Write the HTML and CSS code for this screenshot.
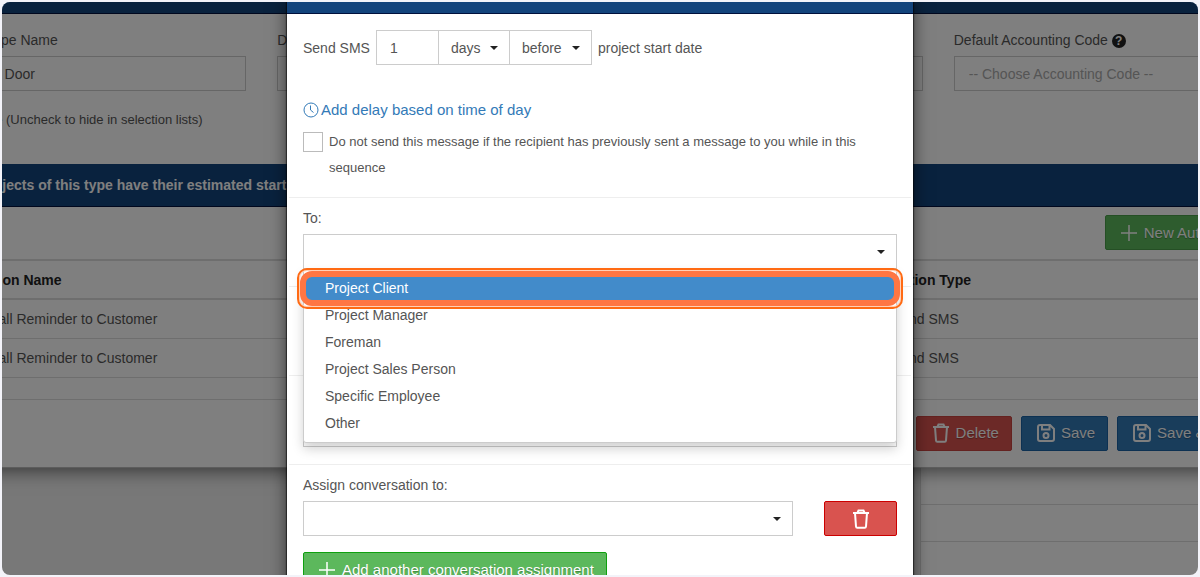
FILE: index.html
```html
<!DOCTYPE html>
<html lang="en">

<head>
  <meta charset="UTF-8" />
  <meta name="viewport" content="width=device-width, initial-scale=1.0" />
  <title>Project Type – Send SMS</title>
  <link rel="stylesheet" href="styles.css">
</head>

<body>
  <svg class="sprite" aria-hidden="true">
    <symbol id="icon-trash" viewBox="0 0 18 20">
      <path d="M1 4h16M5.500 3.700l1-2.200h5l1 2.200M3 4l1 13.500q.1 1.300 1.300 1.300h7.400q1.200 0 1.300-1.300L15 4" />
    </symbol>
    <symbol id="icon-save" viewBox="0 0 18 18">
      <path d="M1 3q0-2 2-2h10l4 4v10q0 2-2 2H3q-2 0-2-2zM5 1v4.500h7.500V1" />
      <circle cx="9" cy="11.500" r="2.500" />
    </symbol>
    <symbol id="icon-plus" viewBox="0 0 16 16">
      <path d="M8 0v16M0 8h16" />
    </symbol>
    <symbol id="icon-clock" viewBox="0 0 16 16">
      <circle cx="8" cy="8" r="7" />
      <path d="M7.500 3.500V8l3 2.500" />
    </symbol>
  </svg>

  <div class="frame">
    <!-- Page behind the dialog -->
    <main class="page">
      <div class="panel">
        <div class="panel-top"></div>
        <div class="fields">
          <div class="field">
            <label for="type-name">Project Type Name</label>
            <input type="text" id="type-name" value="Garage Door">
          </div>
          <div class="field">
            <label for="description">Description</label>
            <input type="text" id="description">
          </div>
          <div class="field">
            <label for="category">Category</label>
            <input type="text" id="category">
          </div>
          <div class="field">
            <label for="code">Default Accounting Code <span class="help">?</span></label>
            <input type="text" id="code" placeholder="-- Choose Accounting Code --">
          </div>
        </div>
        <label class="active-row"><input type="checkbox" class="box" checked> Active (Uncheck to hide in selection lists)</label>

        <h2 class="bar">Projects of this type have their estimated start date</h2>
        <div class="toolbar">
          <button class="btn btn-green"><svg class="icon plus"><use href="#icon-plus" /></svg>New Automation</button>
        </div>
        <table class="actions">
          <thead>
            <tr>
              <th class="name">Action Name</th>
              <th>Action Type</th>
            </tr>
          </thead>
          <tbody>
            <tr>
              <td class="name">Install Reminder to Customer</td>
              <td>Send SMS</td>
            </tr>
            <tr>
              <td class="name">Install Reminder to Customer</td>
              <td>Send SMS</td>
            </tr>
            <tr class="spacer">
              <td colspan="2"></td>
            </tr>
          </tbody>
        </table>
        <div class="panel-footer">
          <button class="btn btn-red"><svg class="icon trash"><use href="#icon-trash" /></svg>Delete</button>
          <button class="btn btn-blue"><svg class="icon save"><use href="#icon-save" /></svg>Save</button>
          <button class="btn btn-blue"><svg class="icon save"><use href="#icon-save" /></svg>Save &amp; Close</button>
        </div>
      </div>
      <div class="under">
        <div class="under-left"></div>
        <div class="under-right">
          <div class="line"></div>
          <div class="line"></div>
          <div class="line"></div>
        </div>
      </div>
    </main>

    <div class="backdrop"></div>

    <!-- Send SMS dialog -->
    <div class="modal" role="dialog" aria-label="Send SMS">
      <div class="modal-header"></div>

      <section class="section timing">
        <div class="when">
          <label for="amount">Send SMS</label>
          <div class="group">
            <input type="text" id="amount" value="1">
            <div class="select unit">
              <select aria-label="Unit">
                <option>days</option>
              </select>
            </div>
            <div class="select direction">
              <select aria-label="Before or after">
                <option>before</option>
              </select>
            </div>
          </div>
          <span>project start date</span>
        </div>
        <a href="#" class="delay"><svg class="icon clock"><use href="#icon-clock" /></svg>Add delay based on time of day</a>
        <label class="check">
          <input type="checkbox" class="box">
          <span>Do not send this message if the recipient has previously sent a message to you while in this sequence</span>
        </label>
      </section>

      <section class="section">
        <label for="to">To:</label>
        <div class="select">
          <select id="to">
            <option></option>
          </select>
          <ul class="menu" role="listbox">
            <li class="selected" role="option" aria-selected="true">Project Client</li>
            <li role="option">Project Manager</li>
            <li role="option">Foreman</li>
            <li role="option">Project Sales Person</li>
            <li role="option">Specific Employee</li>
            <li role="option">Other</li>
          </ul>
        </div>
      </section>

      <section class="section">
        <label for="from">From:</label>
        <div class="select">
          <select id="from">
            <option></option>
          </select>
        </div>
      </section>

      <section class="section">
        <label for="template">Message:</label>
        <div class="select">
          <select id="template">
            <option></option>
          </select>
        </div>
      </section>

      <section class="section">
        <label for="assign">Assign conversation to:</label>
        <div class="assign">
          <div class="select">
            <select id="assign">
              <option></option>
            </select>
          </div>
          <button class="btn btn-red remove" aria-label="Remove"><svg class="icon trash"><use href="#icon-trash" /></svg></button>
        </div>
        <button class="btn btn-green"><svg class="icon plus"><use href="#icon-plus" /></svg>Add another conversation assignment</button>
      </section>
    </div>
  </div>
</body>

</html>
```
FILE: styles.css
```css
:root {
  --navy: #13447c;
  --navy-line: #00103c;
  --text: #555;
  --border: #ccc;
  --line: #eee;
  --orange: #ff6a13;
}

* {
  margin: 0;
  padding: 0;
  box-sizing: border-box;
}

body {
  font-family: "Liberation Sans", Arial, sans-serif;
  font-size: 14px;
  line-height: 20px;
  color: var(--text);
  background-color: #f3f3f9;
}

input,
select,
button {
  font: inherit;
  color: inherit;
}

.sprite {
  display: none;
}

.frame {
  position: relative;
  height: calc(100vh - 4px);
  margin: 2px;
  border-radius: 8px;
  overflow: hidden;
}

/* page behind */
.page {
  min-height: 100%;
  margin: 0 -78px;
  background-color: #f0f0f0;
  display: flex;
  flex-direction: column;
}

.panel {
  position: relative;
  background-color: #fff;
  border-bottom: 1px solid #bbb;
  box-shadow: 0 4px 16px rgba(0, 0, 0, 0.5);
}

.panel-top,
.modal-header {
  height: 12px;
  background-color: var(--navy);
  border-bottom: 1px solid var(--navy-line);
}

.fields {
  display: grid;
  grid-template-columns: repeat(4, 1fr);
  gap: 31px;
  padding: 16px 15px 0;
}

.field label {
  display: block;
  margin-bottom: 6px;
}

.field input {
  width: 100%;
  height: 35px;
  padding: 0 14px;
  border: 1px solid var(--border);
}

.field input::placeholder {
  color: #aaa;
}

.help {
  display: inline-block;
  width: 14px;
  height: 14px;
  border-radius: 50%;
  background-color: #222;
  color: #fff;
  font-size: 12px;
  font-weight: bold;
  line-height: 14px;
  text-align: center;
}

.box {
  appearance: none;
  flex: none;
  width: 20px;
  height: 20px;
  border: 1px solid #bbb;
  background-color: #fff;
}

.active-row {
  display: flex;
  gap: 8px;
  padding: 19px 15px 34px;
  font-size: 13px;
}

.bar {
  padding: 11px 55px;
  background-color: var(--navy);
  border-bottom: 1px solid var(--navy-line);
  color: #fff;
  font-size: 14px;
  line-height: 20px;
}

.toolbar,
.panel-footer {
  display: flex;
  justify-content: flex-end;
  gap: 9px;
  padding: 8px 10px 9px;
}

.panel-footer {
  padding: 16px 15px;
}

.actions {
  width: 100%;
  table-layout: fixed;
  border-collapse: collapse;
}

.actions th,
.actions td {
  height: 39px;
  padding: 0 8px;
  border-bottom: 1px solid #ddd;
  text-align: left;
}

.actions th {
  border-top: 2px solid #ddd;
  border-bottom: 2px solid #ddd;
  color: #222;
}

.actions .name {
  width: 71%;
  padding-left: 52px;
}

.actions .spacer td {
  height: 22px;
}

.under {
  flex: 1;
  display: flex;
}

.under-left {
  flex: 997;
}

.under-right {
  flex: 355;
  background-color: #fff;
  border-left: 1px solid #ddd;
}

.line {
  height: 37px;
  border-bottom: 1px solid #ddd;
}

/* buttons */
.btn {
  display: inline-flex;
  align-items: center;
  height: 35px;
  padding: 0 12px 0 15px;
  border: 1px solid;
  border-radius: 2px;
  color: #fff;
  font-size: 15px;
  text-shadow: 0 1px 1px rgba(0, 0, 0, 0.3);
  white-space: nowrap;
}

.btn-green {
  background-color: #5cb85c;
  border-color: #0fa00f;
}

.btn-red {
  background-color: #d9534f;
  border-color: #c00;
}

.btn-blue {
  background-color: #337ab7;
  border-color: #1b62a5;
}

.page .btn-green {
  border-color: #4a9f4a;
}

.page .btn-red {
  border-color: #c94440;
}

.icon {
  flex: none;
  fill: none;
  stroke: currentColor;
  stroke-width: 1.5;
}

.trash,
.save {
  width: 18px;
  height: 20px;
  margin-right: 6px;
  stroke-width: 2;
}

.save {
  height: 18px;
}

.plus {
  width: 16px;
  height: 16px;
  margin-right: 7px;
}

.clock {
  width: 16px;
  height: 16px;
  margin-right: 2px;
  stroke-width: 1;
}

/* dialog */
.backdrop {
  position: absolute;
  inset: 0;
  background-color: rgba(0, 0, 0, 0.5);
}

.modal {
  position: absolute;
  top: 0;
  left: 0;
  right: 0;
  width: 100%;
  max-width: 626px;
  min-height: 100%;
  margin: 0 auto;
  background-color: #fff;
  box-shadow: 0 0 1px 1px rgba(0, 0, 0, 0.5), 0 0 16px rgba(0, 0, 0, 0.6);
}

.section {
  margin: 0 2px;
  padding: 10px 14px 17px;
  border-bottom: 1px solid var(--line);
}

.section > label {
  display: block;
  margin-bottom: 6px;
}

.timing {
  padding: 16px 14px;
}

.when {
  display: flex;
  align-items: center;
  gap: 6px;
  margin-bottom: 35px;
}

.group {
  display: flex;
}

.group input {
  width: 63px;
  height: 35px;
  padding: 0 13px;
  border: 1px solid var(--border);
}

.select {
  position: relative;
  flex: 1;
}

.select select {
  display: block;
  appearance: none;
  width: 100%;
  height: 35px;
  padding: 0 12px;
  border: 1px solid var(--border);
  border-radius: 0;
  background-color: #fff;
}

.select::after {
  content: "";
  position: absolute;
  top: 16px;
  right: 12px;
  border: 4px solid transparent;
  border-top-color: #222;
  border-bottom: 0;
  pointer-events: none;
}

.group .select {
  flex: none;
  margin-left: -1px;
}

.unit {
  width: 72px;
}

.direction {
  width: 83px;
}

.delay {
  display: flex;
  align-items: center;
  color: #337ab7;
  text-decoration: none;
  font-size: 15px;
}

.section .check {
  display: flex;
  gap: 6px;
  margin: 9px 0 0;
  font-size: 13px;
  line-height: 26px;
}

.check .box {
  margin-top: 3px;
}

.menu {
  position: absolute;
  top: 35px;
  left: 0;
  right: 0;
  z-index: 2;
  padding: 5px 0;
  list-style: none;
  background-color: #fff;
  border: 1px solid var(--border);
  border-radius: 0 0 3px 3px;
  box-shadow: 0 6px 12px rgba(0, 0, 0, 0.18);
}

.menu li {
  padding: 0 21px;
  line-height: 27px;
}

.menu .selected {
  position: relative;
  background-color: #428bca;
  color: #fff;
}

/* orange ring round the chosen option */
.selected::before,
.selected::after {
  content: "";
  position: absolute;
  inset: -7px;
  border: 2px solid var(--orange);
  border-radius: 10px;
  box-shadow: inset 0 0 0 1px #ffd0b8;
}

.selected::after {
  inset: -4px;
  border: 6px solid #ff7643;
  border-radius: 12px;
  box-shadow: none;
}

.assign {
  display: flex;
  gap: 31px;
  margin-bottom: 16px;
}

.remove {
  width: 73px;
  padding: 0;
  justify-content: center;
}

.remove .icon {
  margin: 0;
}
```
